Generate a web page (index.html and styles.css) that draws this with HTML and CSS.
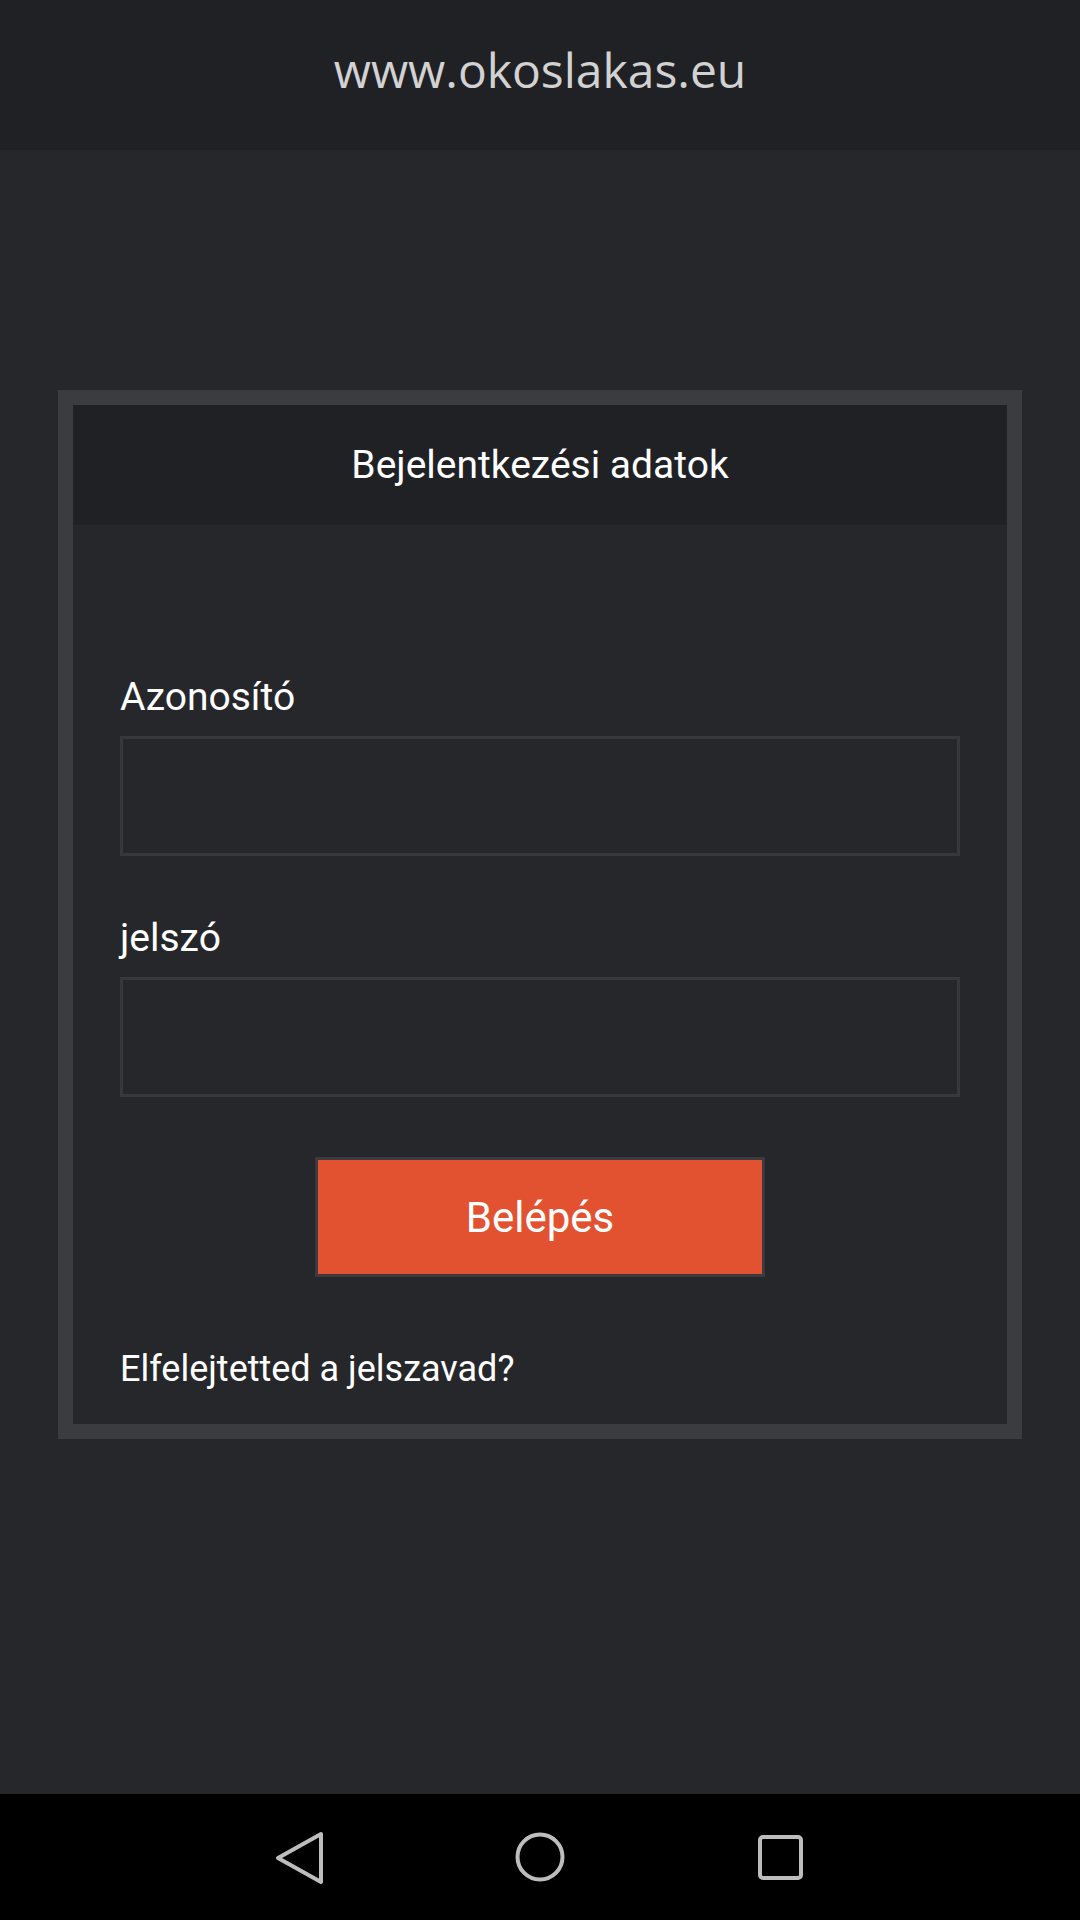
FILE: index.html
```html
<!DOCTYPE html>
<html lang="hu">
<head>
<meta charset="utf-8">
<title>Bejelentkezés</title>
<link rel="stylesheet" href="styles.css">
</head>
<body>
<header class="site-header">www.okoslakas.eu</header>
<main class="main">
  <section class="card">
    <div class="card-head">Bejelentkezési adatok</div>
    <form class="card-body">
      <label class="label label-first" for="user">Azonosító</label>
      <input class="field" id="user" type="text">
      <label class="label label-next" for="pass">jelszó</label>
      <input class="field" id="pass" type="password">
      <div class="btn-row"><button class="btn" type="button">Belépés</button></div>
      <a class="forgot" href="#">Elfelejtetted a jelszavad?</a>
    </form>
  </section>
</main>
<nav class="navbar">
  <svg class="nav-icon" viewBox="0 0 60 60" width="60" height="60"><path d="M51 7 L8 31 L51 55 Z" fill="none" stroke="#bdbdbd" stroke-width="4" stroke-linejoin="round"/></svg>
  <svg class="nav-icon" viewBox="0 0 60 60" width="60" height="60"><circle cx="30" cy="30" r="22.5" fill="none" stroke="#bdbdbd" stroke-width="4"/></svg>
  <svg class="nav-icon" viewBox="0 0 60 60" width="60" height="60"><rect x="10" y="10" width="41" height="41" rx="3" fill="none" stroke="#bdbdbd" stroke-width="4"/></svg>
</nav>
</body>
</html>
```
FILE: styles.css
```css
html, body {
  margin: 0;
  padding: 0;
}
body {
  width: 1080px;
  height: 1920px;
  background: #26272b;
  display: flex;
  flex-direction: column;
  font-family: Roboto, "Noto Sans", sans-serif;
  color: #ffffff;
  overflow: hidden;
}
.site-header {
  height: 150px;
  flex: none;
  background: #202125;
  color: #d2d2d2;
  font-family: "Open Sans", "Noto Sans", sans-serif;
  font-size: 48px;
  line-height: 140px;
  text-align: center;
  box-sizing: border-box;
  border-bottom: 1px solid #1e1f23;
}
.main {
  flex: 1;
  padding-top: 240px;
}
.card {
  margin: 0 58px;
  border: 15px solid #3b3c40;
  background: #26272b;
}
.card-head {
  height: 120px;
  background: #202125;
  font-size: 39px;
  line-height: 120px;
  text-align: center;
  color: #ffffff;
}
.card-body {
  display: flex;
  flex-direction: column;
  padding: 148px 47px 32px 47px;
}
.label {
  font-size: 39px;
  line-height: 48px;
  color: #ffffff;
  margin-bottom: 15px;
}
.label-next {
  margin-top: 58px;
}
.field {
  display: block;
  height: 120px;
  box-sizing: border-box;
  border: 3px solid #37383c;
  background: #26272b;
  margin: 0;
  padding: 0 16px;
  font-size: 36px;
  color: #fff;
  outline: none;
}
.btn-row {
  display: flex;
  justify-content: center;
  margin-top: 60px;
}
.btn {
  width: 450px;
  height: 120px;
  box-sizing: border-box;
  border: 3px solid #3a3b3f;
  background: #e35230;
  color: #ffffff;
  font-family: Roboto, "Noto Sans", sans-serif;
  font-size: 42px;
  padding: 0;
  cursor: pointer;
}
.forgot {
  margin-top: 69px;
  font-size: 36px;
  line-height: 46px;
  color: #ffffff;
  text-decoration: none;
}
.navbar {
  height: 126px;
  flex: none;
  background: #000000;
  display: flex;
  justify-content: center;
  align-items: center;
  gap: 180px;
}
.nav-icon {
  display: block;
}
```
